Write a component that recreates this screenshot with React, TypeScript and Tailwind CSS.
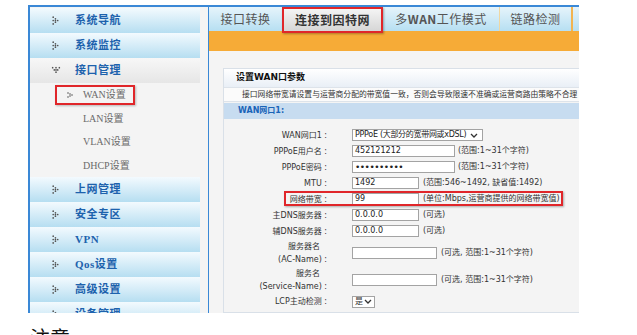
import React from 'react';

const navTop = ['系统导航', '系统监控'];
const navBottom = ['上网管理', '安全专区', 'VPN', 'Qos设置', '高级设置', '设备管理'];
const subItems = ['WAN设置', 'LAN设置', 'VLAN设置', 'DHCP设置'];

function DotArrow({ down = false }: { down?: boolean }) {
  const dots = [
    [1, 1], [3, 2.5], [5, 4], [3, 5.5], [1, 7], [1, 4], [3, 4],
  ];
  return (
    <svg width="8" height="9" viewBox="0 0 7 8" className={down ? 'rotate-90' : ''}>
      {dots.map(([x, y], i) => (
        <circle key={i} cx={x} cy={y} r="0.75" fill="#555" />
      ))}
    </svg>
  );
}

function Chevron() {
  return (
    <svg width="8" height="5" viewBox="0 0 8 5" className="shrink-0">
      <path d="M1 1 L4 4 L7 1" stroke="#333" strokeWidth="1.3" fill="none" />
    </svg>
  );
}

function NavItem({ label, open = false }: { label: string; open?: boolean }) {
  return (
    <div
      className={
        'h-[25px] flex items-center pl-[22px] ' +
        (open
          ? 'bg-linear-to-b from-[#f7f7f7] to-[#e6e6e6]'
          : 'bg-linear-to-b from-[#f3fafe] to-[#b6def1]')
      }
    >
      <DotArrow down={open} />
      <span className="ml-[15px] text-[11px] font-bold tracking-[0.5px] text-[#1d62ad]">{label}</span>
    </div>
  );
}

function Input({ w, value = '', dots = false }: { w: string; value?: string; dots?: boolean }) {
  return (
    <div className={`${w} h-[12px] border border-[#a3a3a3] bg-white px-[2px] flex items-center text-[8px] text-[#222] leading-none`}>
      {dots ? <span className="tracking-[-0.5px] text-[9px]">••••••••••</span> : value}
    </div>
  );
}

function Row({ label, children, className = 'h-[16px]' }: { label: React.ReactNode; children: React.ReactNode; className?: string }) {
  return (
    <div className={`relative flex items-center ${className}`}>
      <div className="w-[104px] text-right pr-[1px] text-[8px] text-[#333] leading-[13px] whitespace-nowrap">{label}</div>
      <div className="ml-[24px] flex items-center text-[8px] text-[#333] whitespace-nowrap">{children}</div>
    </div>
  );
}

export default function App() {
  return (
    <div className="w-[637px] h-[335px] bg-white overflow-hidden font-['DejaVu_Sans','Noto_Sans_CJK_SC',sans-serif]">
      <div className="ml-[28px] pt-[5px] w-[551px]">
        <div className="h-[2px] bg-[#3a88d6]" />
        <div className="flex h-[306px] overflow-hidden">
          {/* sidebar */}
          <div className="w-[180px] border-l-2 border-[#3a88d6] bg-[#f4f4f4] pt-[1px] pr-[8px] font-['Liberation_Serif','Noto_Sans_CJK_SC',serif]">
            {navTop.map((n) => (
              <NavItem key={n} label={n} />
            ))}
            <NavItem label="接口管理" open />
            <div className="h-[94px] flex flex-col">
              {subItems.map((s, i) =>
                i === 0 ? (
                  <div key={s} className="h-[23.5px] flex items-center">
                    <div className="ml-[25px] w-[80px] h-[20px] border-2 border-[#e0262a] shadow-[1px_1px_2px_rgba(0,0,0,0.25)] flex items-center pl-[10px]">
                      <svg width="6" height="6" viewBox="0 0 6 6">
                        <circle cx="1" cy="1" r="0.8" fill="#555" />
                        <circle cx="3" cy="2" r="0.8" fill="#555" />
                        <circle cx="5" cy="3" r="0.8" fill="#555" />
                        <circle cx="3" cy="4" r="0.8" fill="#555" />
                        <circle cx="1" cy="5" r="0.8" fill="#555" />
                      </svg>
                      <span className="ml-[10px] text-[10px] text-[#6b6b6b]">{s}</span>
                    </div>
                  </div>
                ) : (
                  <div key={s} className="h-[23.5px] flex items-center pl-[53px] text-[10px] text-[#6b6b6b]">
                    {s}
                  </div>
                )
              )}
            </div>
            {navBottom.map((n) => (
              <NavItem key={n} label={n} />
            ))}
          </div>
          <div className="w-[1px] bg-[#3a88d6]" />
          {/* panel */}
          <div className="w-[370px] bg-[#f4f4f4] flex flex-col overflow-hidden">
            <div className="h-[24px] flex bg-linear-to-b from-[#e6f4fb] to-[#b6dff2] font-['Noto_Sans_CJK_SC',sans-serif] text-[12px] tracking-[0.5px]">
              <div className="w-[73px] flex items-center justify-center text-[#555]">接口转换</div>
              <div className="relative z-10 w-[101px] h-[26px] border-2 border-[#e0262a] bg-linear-to-b from-[#f4f4f4] to-[#d6d6d6] shadow-[1px_1px_2px_rgba(0,0,0,0.3)] flex items-center justify-center font-bold text-[#333]">
                连接到因特网
              </div>
              <div className="w-[117px] flex items-center justify-center text-[#555] border-r border-[#efd7a2]">
                多<span className="font-bold">WAN</span>工作模式
              </div>
              <div className="w-[73px] flex items-center justify-center text-[#555] border-r-2 border-[#f2b450]">链路检测</div>
              <div className="flex-1" />
            </div>
            <div className="h-[22px] bg-[#f6ab37]" />
            <div className="pt-[17px] pl-[14px]">
              <div className="w-[360px] border border-[#d9e0e8] bg-[#f4f4f4]">
                <div className="h-[18px] flex items-center pl-[12px] bg-linear-to-b from-white to-[#e9eff6] text-[9px] font-bold text-[#111]">
                  设置WAN口参数
                </div>
                <div className="h-[15px] flex items-center pl-[18px] bg-[#fbfbfb] border-y border-[#dde3ea] text-[7.8px] text-[#333] whitespace-nowrap overflow-hidden">
                  接口网络带宽请设置与运营商分配的带宽值一致，否则会导致限速不准确或运营商路由策略不合理
                </div>
                <div className="h-[16px] mt-[1px] flex items-center pl-[14px] bg-[#c7dcf0] text-[8px] font-bold text-[#1a64b8]">
                  WAN网口1:
                </div>
                <div className="pt-[8px] pb-[2px]">
                  <Row label="WAN网口1 :">
                    <div className="w-[131px] h-[12px] border border-[#a3a3a3] bg-white pl-[2px] pr-[4px] flex items-center justify-between text-[8px] text-[#222] leading-none whitespace-nowrap overflow-hidden">
                      <span className="tracking-[-0.3px]">PPPoE (大部分的宽带网或xDSL)</span>
                      <Chevron />
                    </div>
                  </Row>
                  <Row label="PPPoE用户名 :">
                    <Input w="w-[103px]" value="452121212" />
                    <span className="ml-[3px]">(范围:1~31个字符)</span>
                  </Row>
                  <Row label="PPPoE密码 :">
                    <Input w="w-[103px]" dots />
                    <span className="ml-[3px]">(范围:1~31个字符)</span>
                  </Row>
                  <Row label="MTU :">
                    <Input w="w-[67px]" value="1492" />
                    <span className="ml-[4px]">(范围:546~1492, 缺省值:1492)</span>
                  </Row>
                  <Row label="网络带宽 :">
                    <Input w="w-[67px]" value="99" />
                    <span className="ml-[4px]">(单位:Mbps,运营商提供的网络带宽值)</span>
                    <div className="absolute left-[60px] top-0 w-[279px] h-[15px] border-2 border-[#e0262a] shadow-[1px_1px_2px_rgba(0,0,0,0.3)]" />
                  </Row>
                  <Row label="主DNS服务器 :">
                    <Input w="w-[67px]" value="0.0.0.0" />
                    <span className="ml-[4px]">(可选)</span>
                  </Row>
                  <Row label="辅DNS服务器 :">
                    <Input w="w-[67px]" value="0.0.0.0" />
                    <span className="ml-[4px]">(可选)</span>
                  </Row>
                  <Row
                    className="h-[27px]"
                    label={
                      <>
                        <div className="pr-[7px]">服务器名</div>
                        <div>(AC-Name) :</div>
                      </>
                    }
                  >
                    <Input w="w-[85px]" />
                    <span className="ml-[4px]">(可选, 范围:1~31个字符)</span>
                  </Row>
                  <Row
                    className="h-[27px]"
                    label={
                      <>
                        <div className="pr-[7px]">服务名</div>
                        <div>(Service-Name) :</div>
                      </>
                    }
                  >
                    <Input w="w-[85px]" />
                    <span className="ml-[4px]">(可选, 范围:1~31个字符)</span>
                  </Row>
                  <Row label="LCP主动检测 :" className="h-[17px]">
                    <div className="w-[23px] h-[12px] border border-[#a3a3a3] bg-white pl-[2px] pr-[2px] flex items-center justify-between text-[8px] leading-none">
                      <span>是</span>
                      <Chevron />
                    </div>
                  </Row>
                </div>
              </div>
            </div>
          </div>
        </div>
      </div>
      <div className="ml-[30px] mt-[15px] text-[20px] leading-none text-[#111] font-['Noto_Sans_CJK_SC',sans-serif]">注意</div>
    </div>
  );
}
